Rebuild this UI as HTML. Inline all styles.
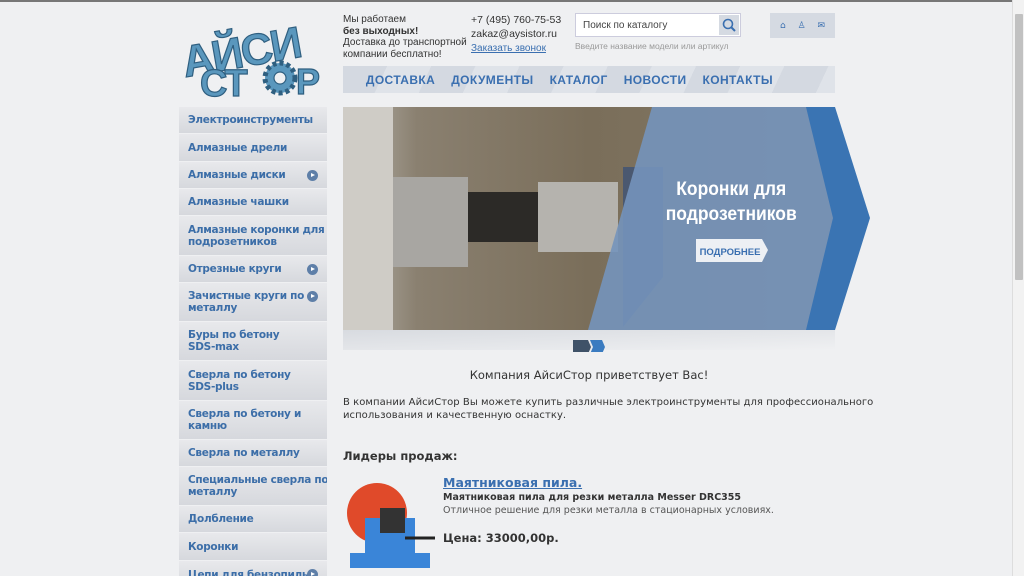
<!DOCTYPE html>
<html><head><meta charset="utf-8"><style>
*{margin:0;padding:0;box-sizing:border-box}
html,body{width:1024px;height:576px;overflow:hidden}
body{background:#eff0f2;font-family:"DejaVu Sans","Liberation Sans",sans-serif;position:relative}
.top{position:absolute;left:0;top:0;width:1024px;height:2px;background:#777}
.sb{position:absolute;right:0;top:0;width:12px;height:576px;background:#f2f2f2;border-left:1px solid #ddd}
.sb i{position:absolute;left:2px;top:14px;width:8px;height:266px;background:#c1c1c1;border-radius:1px}
.a{position:absolute}
.menu{position:absolute;left:179px;top:107px;width:148px}
.menu div{background:linear-gradient(#e8e9ec,#d6d8dd);color:#3c6ea8;font-weight:bold;font-size:10.5px;line-height:12px;padding:0 9px;margin-bottom:1px;display:flex;align-items:center;position:relative;letter-spacing:-0.3px;white-space:nowrap;overflow:hidden}
.menu div b{position:absolute;right:9px;top:8px;width:11px;height:11px;border-radius:50%;background:#5e7fa8}
.menu div b:after{content:"";position:absolute;left:4px;top:3px;border-left:4px solid #fff;border-top:2.5px solid transparent;border-bottom:2.5px solid transparent}
.nav{position:absolute;left:343px;top:66px;width:492px;height:27px;background:repeating-linear-gradient(115deg,#d4d9e1 0 40px,#dfe3e9 40px 80px);display:flex;justify-content:flex-end;align-items:center;padding-right:62px;gap:16px;font-family:"Liberation Sans",sans-serif;font-weight:bold;font-size:12px;color:#3a6fb0;letter-spacing:0.4px}
.txt{font-size:10.5px;color:#333;font-family:"Liberation Sans",sans-serif}
</style></head><body>
<div class="top"></div>
<div class="sb"><i></i></div>
<svg class="a" style="left:178px;top:14px" width="152" height="84" viewBox="0 0 152 84">
<g font-family="Liberation Sans" font-weight="bold" fill="#5a97bd" stroke="#2f5f80" stroke-width="1.2">
<text x="4" y="52" font-size="44" transform="rotate(-10 70 40)" letter-spacing="-2">АЙСИ</text>
<text x="22" y="82" font-size="38" letter-spacing="-2">СТ</text>
<circle cx="102" cy="64" r="15" fill="#5a97bd" stroke-dasharray="4 3" stroke-width="5"/><circle cx="102" cy="64" r="6" fill="#eff0f2"/>
<text x="118" y="80" font-size="36">Р</text></g></svg>
<div class="a txt" style="left:343px;top:14px;line-height:11.5px;font-size:10px">Мы работаем<br><b>без выходных!</b><br>Доставка до транспортной<br>компании бесплатно!</div>
<div class="a txt" style="left:471px;top:13px;line-height:14px;font-size:10.5px">+7 (495) 760-75-53<br>zakaz@aysistor.ru<br><span style="color:#3a6fb0;text-decoration:underline;font-size:10px">Заказать звонок</span></div>
<div class="a" style="left:575px;top:13px;width:166px;height:24px;background:#fff;border:1px solid #ccd;font-size:10px;color:#444;font-family:'Liberation Sans';padding:6px 7px">Поиск по каталогу<div class="a" style="right:1px;top:1px;width:20px;height:20px;background:#d5dae2"><svg width="20" height="20"><circle cx="9" cy="9" r="4.5" fill="none" stroke="#3a6fb0" stroke-width="1.6"/><path d="M12 12l4 4" stroke="#3a6fb0" stroke-width="2"/></svg></div></div>
<div class="a" style="left:575px;top:41px;font-size:8.5px;color:#999;font-family:'Liberation Sans'">Введите название модели или артикул</div>
<div class="a" style="left:770px;top:13px;width:65px;height:25px;background:#d5dae2;color:#3a6fb0;font-size:9px;display:flex;justify-content:space-around;align-items:center;padding:0 4px">⌂<span>♙</span><span>✉</span></div>
<div class="nav"><span>ДОСТАВКА</span><span>ДОКУМЕНТЫ</span><span>КАТАЛОГ</span><span>НОВОСТИ</span><span>КОНТАКТЫ</span></div>
<div class="menu">
<div style="height:26px">Электроинструменты</div>
<div style="height:27px">Алмазные дрели</div>
<div style="height:26px">Алмазные диски<b></b></div>
<div style="height:26px">Алмазные чашки</div>
<div style="height:39px">Алмазные коронки для<br>подрозетников</div>
<div style="height:26px">Отрезные круги<b></b></div>
<div style="height:38px">Зачистные круги по<br>металлу<b></b></div>
<div style="height:38px">Буры по бетону<br>SDS-max</div>
<div style="height:39px">Сверла по бетону<br>SDS-plus</div>
<div style="height:38px">Сверла по бетону и<br>камню</div>
<div style="height:26px">Сверла по металлу</div>
<div style="height:38px">Специальные сверла по<br>металлу</div>
<div style="height:26px">Долбление</div>
<div style="height:27px">Коронки</div>
<div style="height:27px">Цепи для бензопилы<b></b></div>
</div>
<svg class="a" style="left:343px;top:107px" width="530" height="245" viewBox="0 0 530 245">
<defs><linearGradient id="bg" x1="0" x2="1"><stop offset="0" stop-color="#b8b6ae"/><stop offset=".15" stop-color="#8a8070"/><stop offset=".5" stop-color="#7a6e5a"/><stop offset="1" stop-color="#857a66"/></linearGradient>
<linearGradient id="sh" y1="0" y2="1"><stop offset="0" stop-color="#d8dbe0"/><stop offset="1" stop-color="#eff0f2"/></linearGradient></defs>
<rect x="0" y="223" width="492" height="20" fill="url(#sh)"/>
<rect width="492" height="223" fill="url(#bg)"/>
<rect width="50" height="223" fill="#cfccc6"/>
<rect x="50" y="70" width="75" height="90" fill="#a8a6a2"/>
<rect x="125" y="85" width="70" height="50" fill="#2c2a27"/>
<rect x="195" y="75" width="80" height="70" fill="#b5b3ae"/>
<path d="M280 60h40v110l-40 50z" fill="#4a5870"/>
<polygon points="309,0 492,0 492,223 245,223" fill="#7494bb" opacity=".9"/>
<polygon points="463,0 492,0 527,111 492,223 463,223 490,111" fill="#3a74b3"/>
<text x="390" y="88" text-anchor="middle" font-family="Liberation Sans" font-weight="bold" font-size="19" fill="#fff" transform="scale(.92 1) translate(32 0)">Коронки для</text>
<text x="390" y="113" text-anchor="middle" font-family="Liberation Sans" font-weight="bold" font-size="19" fill="#fff" transform="scale(.92 1) translate(32 0)">подрозетников</text>
<polygon points="353,132 419,132 425,143 419,155 353,155" fill="#edf0f4"/>
<text x="387" y="148" text-anchor="middle" font-family="Liberation Sans" font-weight="bold" font-size="9.5" fill="#3a6fb0">ПОДРОБНЕЕ</text>
<polygon points="230,233 245,233 248,240 245,247 230,247" fill="#3f5268"/>
<polygon points="247,233 259,233 262,240 259,247 247,247 250,240" fill="#3a7bc0"/>
</svg>
<div class="a txt" style="left:343px;top:368px;width:492px;text-align:center;font-family:'DejaVu Sans';font-size:11.5px">Компания АйсиСтор приветствует Вас!</div>
<div class="a" style="left:343px;top:396px;font-size:10px;line-height:13px;color:#333;white-space:nowrap;letter-spacing:0.05px">В компании АйсиСтор Вы можете купить различные электроинструменты для профессионального<br>использования и качественную оснастку.</div>
<div class="a" style="left:343px;top:449px;font-size:11.5px;font-weight:bold;color:#333">Лидеры продаж:</div>
<svg class="a" style="left:345px;top:478px" width="95" height="95"><circle cx="32" cy="35" r="30" fill="#e04a2a"/><rect x="20" y="40" width="50" height="40" fill="#3a85d8"/><rect x="5" y="75" width="80" height="15" fill="#3a85d8"/><rect x="35" y="30" width="25" height="25" fill="#333"/><path d="M60 60h30" stroke="#222" stroke-width="3"/></svg>
<div class="a" style="left:443px;top:475px;font-size:12.5px;font-weight:bold;color:#3a6fb0;text-decoration:underline">Маятниковая пила. </div>
<div class="a" style="left:443px;top:492px;font-size:9.5px;font-weight:bold;color:#333">Маятниковая пила для резки металла Messer DRC355</div>
<div class="a" style="left:443px;top:505px;font-size:9.5px;color:#555">Отличное решение для резки металла в стационарных условиях.</div>
<div class="a" style="left:443px;top:531px;font-size:11.5px;font-weight:bold;color:#333">Цена: 33000,00р.</div>
</body></html>
